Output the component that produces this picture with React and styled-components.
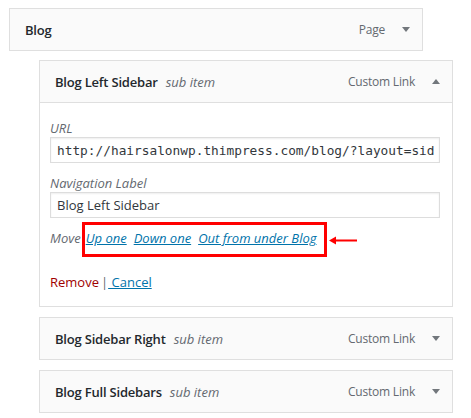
import React from 'react';
import styled, { createGlobalStyle } from 'styled-components';

const GlobalStyle = createGlobalStyle`
  body {
    margin: 0;
    background: #ffffff;
    font-family: "Open Sans", "Noto Sans", sans-serif;
    color: #23282d;
  }
`;

const Page = styled.div`
  padding: 8px 0 0 9px;
  width: 471px;
  height: 418px;
  box-sizing: border-box;
`;

const Item = styled.div`
  width: 414px;
  margin-left: ${({ depth }) => depth * 30}px;
  margin-bottom: ${({ gap }) => gap}px;
`;

const Handle = styled.div`
  height: 43px;
  box-sizing: border-box;
  border: 1px solid #dfdfdf;
  background: #fafafa;
  display: flex;
  align-items: center;
  padding: 0 12px 0 15px;
`;

const Title = styled.span`
  font-size: 13px;
  font-weight: 600;
  letter-spacing: -0.2px;
  color: #23282d;
`;

const SubLabel = styled.span`
  font-size: 13px;
  font-style: italic;
  color: #646970;
  margin-left: 8px;
`;

const Type = styled.span`
  margin-left: auto;
  font-size: 12px;
  letter-spacing: -0.2px;
  color: #646970;
`;

const Toggle = styled.svg`
  width: 8px;
  height: 5px;
  margin-left: 17px;
  fill: #72777c;
  transform: ${({ open }) => (open ? 'rotate(180deg)' : 'none')};
`;

const Settings = styled.div`
  border: 1px solid #dfdfdf;
  border-top: none;
  padding: 17px 12px 14px 10px;
  background: #ffffff;
`;

const FieldLabel = styled.label`
  display: block;
  font-size: 13px;
  line-height: 17px;
  font-style: italic;
  color: #646970;
  margin-top: ${({ space }) => space}px;
`;

const Input = styled.div`
  box-sizing: border-box;
  width: 390px;
  height: 26px;
  border: 1px solid #dddddd;
  box-shadow: inset 0 1px 2px rgba(0, 0, 0, 0.07);
  padding: 0 6px;
  display: flex;
  align-items: center;
  overflow: hidden;
  white-space: nowrap;
  font-size: ${({ mono }) => (mono ? '12.8px' : '13px')};
  font-family: ${({ mono }) => (mono ? '"DejaVu Sans Mono", "Liberation Mono", monospace' : 'inherit')};
  color: #32373c;
`;

const MoveRow = styled.div`
  margin-top: 10px;
  line-height: 20px;
  font-size: 13px;
  font-style: italic;
  color: #646970;
  display: flex;
  align-items: center;
`;

const MoveLinks = styled.span`
  position: relative;
  display: inline-flex;
  gap: 7px;
  margin-left: 5px;
`;

const Link = styled.a`
  color: #0073aa;
  text-decoration: underline;
  cursor: pointer;
`;

const Highlight = styled.span`
  position: absolute;
  left: -4px;
  top: -6px;
  width: 245px;
  height: 35px;
  box-sizing: border-box;
  border: 3px solid #ff0000;
  pointer-events: none;
`;

const Pointer = styled.svg`
  position: absolute;
  left: 243px;
  top: 8px;
  width: 28px;
  height: 9px;
`;

const Actions = styled.div`
  margin-top: 24px;
  line-height: 20px;
  font-size: 13px;
  color: #646970;
`;

const RemoveLink = styled.a`
  color: #a00000;
  margin-right: 2px;
`;

const Arrow = ({ open }) => (
  <Toggle open={open} viewBox="0 0 8 5">
    <polygon points="0,0 8,0 4,5" />
  </Toggle>
);

const ItemHandle = ({ title, sub, type, open }) => (
  <Handle>
    <Title>{title}</Title>
    {sub && <SubLabel>sub item</SubLabel>}
    <Type>{type}</Type>
    <Arrow open={open} />
  </Handle>
);

export default function App() {
  return (
    <>
      <GlobalStyle />
      <Page>
        <Item depth={0} gap={9}>
          <ItemHandle title="Blog" type="Page" />
        </Item>
        <Item depth={1} gap={10}>
          <ItemHandle title="Blog Left Sidebar" sub type="Custom Link" open />
          <Settings>
            <FieldLabel space={0}>URL</FieldLabel>
            <Input mono>http://hairsalonwp.thimpress.com/blog/?layout=sid</Input>
            <FieldLabel space={12}>Navigation Label</FieldLabel>
            <Input>Blog Left Sidebar</Input>
            <MoveRow>
              Move
              <MoveLinks>
                <Link>Up one</Link>
                <Link>Down one</Link>
                <Link>Out from under Blog</Link>
                <Highlight />
                <Pointer viewBox="0 0 28 9">
                  <polygon points="0,4.5 7,0.5 7,8.5" fill="#ff0000" />
                  <rect x="6" y="3.5" width="22" height="2" fill="#ff0000" />
                </Pointer>
              </MoveLinks>
            </MoveRow>
            <Actions>
              <RemoveLink>Remove</RemoveLink>|<Link> Cancel</Link>
            </Actions>
          </Settings>
        </Item>
        <Item depth={1} gap={10}>
          <ItemHandle title="Blog Sidebar Right" sub type="Custom Link" />
        </Item>
        <Item depth={1} gap={0}>
          <ItemHandle title="Blog Full Sidebars" sub type="Custom Link" />
        </Item>
      </Page>
    </>
  );
}
